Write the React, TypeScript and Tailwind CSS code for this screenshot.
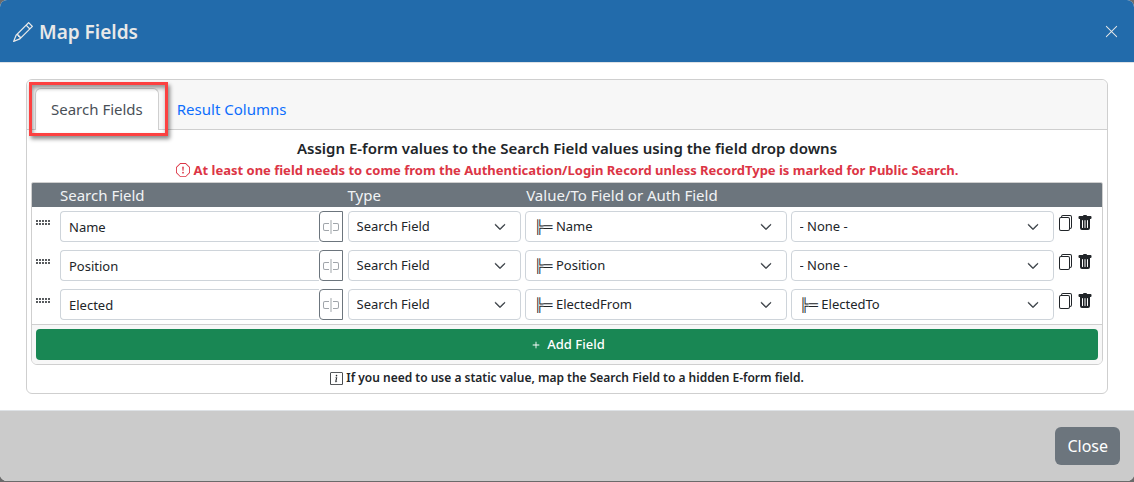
import { useState } from 'react'
import {
  BsChevronDown,
  BsExclamationOctagon,
  BsFiles,
  BsGripHorizontal,
  BsInfoSquare,
  BsInputCursor,
  BsPencil,
  BsPlus,
  BsTrashFill,
  BsXLg,
} from 'react-icons/bs'

/* ─── Types ─── */

interface FieldMapping {
  id: number
  name: string
  type: string
  from: string
  to: string
}

const NONE = '- None -'
const TREE = '╠═ '

const TYPES = ['Search Field', 'Static Value']
const FORM_FIELDS = ['Name', 'Position', 'ElectedFrom', 'ElectedTo']
const FIELD_OPTIONS = [NONE, ...FORM_FIELDS.map((f) => TREE + f)]

const INITIAL_ROWS: FieldMapping[] = [
  { id: 1, name: 'Name', type: TYPES[0], from: TREE + 'Name', to: NONE },
  { id: 2, name: 'Position', type: TYPES[0], from: TREE + 'Position', to: NONE },
  { id: 3, name: 'Elected', type: TYPES[0], from: TREE + 'ElectedFrom', to: TREE + 'ElectedTo' },
]

/* ─── Select with its own chevron ─── */

function SelectBox({
  label,
  value,
  options,
  onChange,
}: {
  label: string
  value: string
  options: string[]
  onChange: (value: string) => void
}) {
  return (
    <div className="relative">
      <select
        aria-label={label}
        value={value}
        onChange={(e) => onChange(e.target.value)}
        className="block h-[31px] w-full appearance-none rounded border border-[#ced4da] bg-white pr-8 pl-2 text-[13px] text-[#212529]"
      >
        {options.map((o) => (
          <option key={o}>{o}</option>
        ))}
      </select>
      <BsChevronDown
        className="pointer-events-none absolute top-[10px] right-[15px] size-3 stroke-1 text-[#343a40]"
        aria-hidden="true"
      />
    </div>
  )
}

/* ─── Main Component ─── */

export default function App() {
  const [tab, setTab] = useState('search')
  const [rows, setRows] = useState(INITIAL_ROWS)

  const update = (id: number, patch: Partial<FieldMapping>) =>
    setRows((prev) => prev.map((r) => (r.id === id ? { ...r, ...patch } : r)))

  const nextId = () => Math.max(0, ...rows.map((r) => r.id)) + 1

  const addRow = () => setRows([...rows, { id: nextId(), name: '', type: TYPES[0], from: NONE, to: NONE }])

  return (
    <div className="border-b border-[#6b6b6b] bg-[#6b6b6b] font-['Noto_Sans','Open_Sans',sans-serif] text-[#212529]">
      <div role="dialog" aria-labelledby="map-title" className="overflow-hidden rounded-[7px] bg-white">
        <header className="flex h-[63px] items-center justify-between border-b border-[#dee2e6] bg-[#226bab] px-[13px] text-[#e8e8e8]">
          <h1 id="map-title" className="flex items-center gap-1.5 pt-0.5 text-[19px] font-semibold">
            <BsPencil className="size-5" aria-hidden="true" />
            Map Fields
          </h1>
          <button type="button" aria-label="Close dialog" className="px-0.5">
            <BsXLg className="size-[15px]" />
          </button>
        </header>

        <main className="px-[26px] py-4">
          <section className="rounded-md border border-[#cfcfcf]">
            <div className="relative flex rounded-t-md border-b border-[#cfcfcf] bg-[#f7f7f7] px-2 pt-2" role="tablist">
              <button
                type="button"
                role="tab"
                aria-selected={tab === 'search'}
                onClick={() => setTab('search')}
                className="-mb-px h-[42px] rounded-t-md border border-b-0 border-[#cfcfcf] bg-white px-[15px] text-[15px] text-[#495057]"
              >
                Search Fields
              </button>
              <button
                type="button"
                role="tab"
                aria-selected={tab === 'results'}
                onClick={() => setTab('results')}
                className="h-[41px] border-t border-transparent px-[18px] text-[15px] text-[#0d6efd]"
              >
                Result Columns
              </button>
              {/* Callout frame round the active tab */}
              <div className="pointer-events-none absolute top-[2px] left-[2px] h-[54px] w-[139px] border-3 border-[#fc4141] shadow-[2px_3px_4px_rgba(0,0,0,0.45),inset_1px_3px_4px_rgba(0,0,0,0.4)]" />
            </div>

            <div className="px-1 pt-[7px]">
              <p className="text-center text-[15px] leading-[22px] font-semibold">
                Assign E-form values to the Search Field values using the field drop downs
              </p>
              <p className="flex items-center justify-center gap-1 pt-px pb-0.5 text-[13px] leading-5 font-bold text-[#dc3545]">
                <BsExclamationOctagon className="size-[14px]" aria-hidden="true" />
                At least one field needs to come from the Authentication/Login Record unless RecordType is marked for
                Public Search.
              </p>

              <div className="overflow-hidden rounded-b-md rounded-t-xs border border-[#cfcfcf]">
                <table className="w-full table-fixed">
                  <colgroup>
                    <col className="w-[26px]" />
                    <col />
                    <col className="w-[16.6%]" />
                    <col className="w-[24.8%]" />
                    <col className="w-[25%]" />
                    <col className="w-[46px]" />
                  </colgroup>
                  <thead>
                    <tr className="bg-[#6c757d] text-left text-[15px] leading-6 text-[#f1f3f5]">
                      <td />
                      <th className="px-0.5 font-normal">Search Field</th>
                      <th className="px-0.5 font-normal">Type</th>
                      <th className="px-[3px] font-normal" colSpan={2}>
                        Value/To Field or Auth Field
                      </th>
                      <td />
                    </tr>
                  </thead>
                  <tbody>
                    {rows.map((row) => (
                      <tr key={row.id} className="h-[39px]">
                        <td className="pt-2 pl-[3px] align-top">
                          <BsGripHorizontal className="size-4" aria-hidden="true" />
                        </td>
                        <td className="pr-[3px] pl-0.5">
                          <div className="flex">
                            <input
                              type="text"
                              aria-label="Search field"
                              value={row.name}
                              onChange={(e) => update(row.id, { name: e.target.value })}
                              className="h-[31px] min-w-0 flex-1 rounded-l border border-r-0 border-[#ced4da] px-2 text-[13px]"
                            />
                            <button
                              type="button"
                              aria-label="Insert field"
                              className="flex h-[31px] w-6 items-center justify-center rounded-l border border-[#6c757d] text-[#a0a5aa]"
                            >
                              <BsInputCursor className="size-4" />
                            </button>
                          </div>
                        </td>
                        <td className="px-0.5">
                          <SelectBox
                            label="Type"
                            value={row.type}
                            options={TYPES}
                            onChange={(type) => update(row.id, { type })}
                          />
                        </td>
                        <td className="px-0.5">
                          <SelectBox
                            label="Value field"
                            value={row.from}
                            options={FIELD_OPTIONS}
                            onChange={(from) => update(row.id, { from })}
                          />
                        </td>
                        <td className="px-0.5">
                          <SelectBox
                            label="To field or auth field"
                            value={row.to}
                            options={FIELD_OPTIONS}
                            onChange={(to) => update(row.id, { to })}
                          />
                        </td>
                        <td className="px-px pt-2 align-top">
                          <div className="flex gap-1">
                            <button
                              type="button"
                              aria-label="Copy row"
                              onClick={() => setRows([...rows, { ...row, id: nextId() }])}
                            >
                              <BsFiles className="size-4" />
                            </button>
                            <button
                              type="button"
                              aria-label="Delete row"
                              onClick={() => setRows(rows.filter((r) => r.id !== row.id))}
                            >
                              <BsTrashFill className="size-4" />
                            </button>
                          </div>
                        </td>
                      </tr>
                    ))}
                  </tbody>
                </table>
                <div className="border-t border-[#cfcfcf] bg-[#f7f7f7] p-1">
                  <button
                    type="button"
                    onClick={addRow}
                    className="flex h-[31px] w-full items-center justify-center gap-1 rounded bg-[#198754] text-[13px] font-medium text-white"
                  >
                    <BsPlus className="size-[14px]" aria-hidden="true" />
                    Add Field
                  </button>
                </div>
              </div>

              <p className="flex items-center justify-center gap-[3px] pt-[3px] pb-[5px] text-xs leading-5 font-semibold">
                <BsInfoSquare className="size-[13px]" aria-hidden="true" />
                If you need to use a static value, map the Search Field to a hidden E-form field.
              </p>
            </div>
          </section>
        </main>

        <footer className="flex h-[71px] items-center justify-end border-t border-[#dee2e6] bg-[#cbcbcb] px-[14px]">
          <button type="button" className="h-[38px] rounded-md bg-[#6c757d] px-3 text-base text-white">
            Close
          </button>
        </footer>
      </div>
    </div>
  )
}
